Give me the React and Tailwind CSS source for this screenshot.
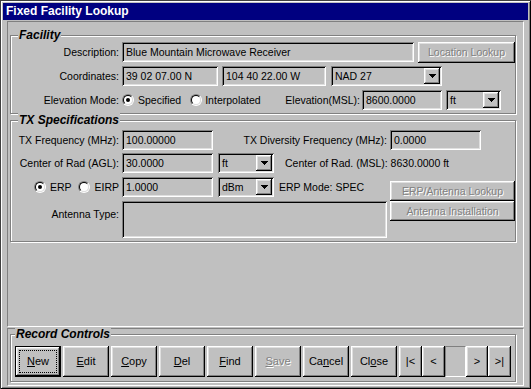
import React from "react"

const raised =
  "shadow-[inset_-1px_-1px_#000,inset_1px_1px_#fff,inset_-2px_-2px_#808080,inset_2px_2px_#dfdfdf]"
const sunken =
  "shadow-[inset_1px_1px_#808080,inset_-1px_-1px_#fff,inset_2px_2px_#000,inset_-2px_-2px_#dfdfdf]"
const etched = "border border-[#808080] shadow-[inset_1px_1px_#fff,1px_1px_#fff]"
const disabledText = "text-[#808080] [text-shadow:1px_1px_0_#fff]"
const thinSunken = "border border-t-[#808080] border-l-[#808080] border-b-white border-r-white"

const Field = ({ className = "", children }) => (
  <div
    className={`${sunken} h-[20px] px-[4px] flex items-center whitespace-nowrap overflow-hidden shrink-0 ${className}`}
  >
    {children}
  </div>
)

const Arrow = () => (
  <svg width="7" height="4" viewBox="0 0 7 4" shapeRendering="crispEdges">
    <path d="M0 0h7v1h-1v1h-1v1h-1v1h-1v-1h-1v-1h-1v-1h-1z" fill="#000" />
  </svg>
)

const Select = ({ className = "", children }) => (
  <div className={`${sunken} h-[20px] p-[2px] flex items-center shrink-0 ${className}`}>
    <span className="flex-1 pl-[2px] whitespace-nowrap">{children}</span>
    <div className={`${raised} w-[16px] h-[16px] flex items-center justify-center`}>
      <Arrow />
    </div>
  </div>
)

const Radio = ({ checked }) => (
  <div className="w-[12px] h-[12px] rounded-full border border-t-[#808080] border-l-[#808080] border-b-white border-r-white shrink-0">
    <div className="w-full h-full rounded-full border border-t-black border-l-black border-b-[#dfdfdf] border-r-[#dfdfdf] bg-white flex items-center justify-center">
      {checked && <div className="w-[4px] h-[4px] rounded-full bg-black" />}
    </div>
  </div>
)

const Btn = ({ className = "", disabled, children }) => (
  <div
    className={`${raised} flex items-center justify-center whitespace-nowrap shrink-0 ${
      disabled ? disabledText : "text-black"
    } ${className}`}
  >
    {children}
  </div>
)

const Group = ({ title, legendLeft = "left-[7px]", className = "", children }) => (
  <div className={`relative ${etched} ${className}`}>
    <span
      className={`absolute ${legendLeft} top-[-8px] px-[1px] bg-[#c0c0c0] font-bold italic text-[12px] leading-[14px]`}
    >
      {title}
    </span>
    {children}
  </div>
)

const Label = ({ children }) => (
  <span className="w-[111px] pr-[3px] text-right whitespace-nowrap shrink-0">{children}</span>
)

const App = () => {
  return (
    <div className="w-[531px] h-[389px] bg-[#c0c0c0] p-[3px] flex flex-col font-['Liberation_Sans',Arial,sans-serif] text-[10.5px] leading-[13px] text-black shadow-[inset_1px_1px_#404040,inset_-1px_-1px_#000,inset_2px_2px_#fff,inset_-2px_-2px_#808080]">
      <div className="h-[17px] bg-[#000080] text-white font-bold text-[12px] px-[3px] flex items-center shrink-0">
        Fixed Facility Lookup
      </div>

      <div className="flex-1 flex flex-col px-[4px] pt-[1px]">
        {/* upper panel */}
        <div className={`h-[306px] ${thinSunken} px-[2px]`}>
          <Group title="Facility" className="mt-[13px] h-[79px] w-[506px] pt-[6px] flex flex-col gap-[4px]">
            <div className="flex items-center h-[20px]">
              <Label>Description:</Label>
              <Field className="w-[292px]">Blue Mountain Microwave Receiver</Field>
              <Btn disabled className="ml-auto w-[97px] h-[21px]">
                Location Lookup
              </Btn>
            </div>
            <div className="flex items-center h-[20px]">
              <Label>Coordinates:</Label>
              <Field className="w-[96px]">39 02 07.00 N</Field>
              <Field className="w-[104px] ml-[4px]">104 40 22.00 W</Field>
              <Select className="w-[111px] ml-[5px]">NAD 27</Select>
            </div>
            <div className="flex items-center h-[20px]">
              <Label>Elevation Mode:</Label>
              <div className="w-[162px] flex items-center shrink-0">
                <Radio checked />
                <span className="ml-[4px]">Specified</span>
                <span className="ml-[9px]">
                  <Radio />
                </span>
                <span className="ml-[3px]">Interpolated</span>
              </div>
              <span className="w-[78px] pr-[2px] text-right whitespace-nowrap shrink-0">Elevation(MSL):</span>
              <Field className="w-[80px]">8600.0000</Field>
              <Select className="w-[55px] ml-[4px]">ft</Select>
            </div>
          </Group>

          <Group title="TX Specifications" className="mt-[6px] h-[122px] w-[506px] pt-[9px] flex flex-col">
            <div className="flex items-center h-[20px]">
              <Label>TX Frequency (MHz):</Label>
              <Field className="w-[91px]">100.00000</Field>
              <span className="w-[177px] pr-[3px] text-right whitespace-nowrap shrink-0">
                TX Diversity Frequency (MHz):
              </span>
              <Field className="w-[91px]">0.0000</Field>
            </div>
            <div className="flex items-center h-[20px] mt-[3px]">
              <Label>Center of Rad (AGL):</Label>
              <Field className="w-[91px]">30.0000</Field>
              <Select className="w-[56px] ml-[5px]">ft</Select>
              <span className="ml-[11px] whitespace-nowrap">Center of Rad. (MSL): 8630.0000 ft</span>
            </div>
            <div className="flex mt-[4px]">
              <div className="w-[379px] flex flex-col shrink-0">
                <div className="flex items-center h-[20px]">
                  <div className="w-[111px] pr-[3px] flex items-center justify-end shrink-0">
                    <Radio checked />
                    <span className="ml-[4px]">ERP</span>
                    <span className="ml-[7px]">
                      <Radio />
                    </span>
                    <span className="ml-[4px]">EIRP</span>
                  </div>
                  <Field className="w-[91px]">1.0000</Field>
                  <Select className="w-[56px] ml-[5px]">dBm</Select>
                  <span className="ml-[5px] whitespace-nowrap">ERP Mode: SPEC</span>
                </div>
                <div className="flex items-start mt-[4px]">
                  <span className="w-[111px] pr-[3px] text-right pt-[7px] shrink-0">Antenna Type:</span>
                  <div className={`${sunken} w-[265px] h-[37px]`} />
                </div>
              </div>
              <div className="flex flex-col pt-[4px]">
                <Btn disabled className="w-[125px] h-[20px]">
                  ERP/Antenna Lookup
                </Btn>
                <Btn disabled className="w-[125px] h-[20px]">
                  Antenna Installation
                </Btn>
              </div>
            </div>
          </Group>
        </div>

        {/* record controls panel */}
        <div className={`flex-1 mt-[1px] ${thinSunken} px-[2px]`}>
          <Group
            title="Record Controls"
            legendLeft="left-[4px]"
            className="mt-[5px] h-[48px] w-[506px] pt-[11px] pl-[4px] flex items-start text-[11px]"
          >
            <div className="relative w-[46px] h-[31px] border border-black shrink-0">
              <Btn className="w-full h-full">
                <u>N</u>ew
              </Btn>
              <div className="absolute inset-[3px] border border-dotted border-black" />
            </div>
            <Btn className="w-[46px] h-[31px] ml-[2px]">
              <u>E</u>dit
            </Btn>
            <Btn className="w-[46px] h-[31px] ml-[2px]">
              <u>C</u>opy
            </Btn>
            <Btn className="w-[46px] h-[31px] ml-[2px]">
              <u>D</u>el
            </Btn>
            <Btn className="w-[46px] h-[31px] ml-[2px]">
              <u>F</u>ind
            </Btn>
            <Btn disabled className="w-[46px] h-[31px] ml-[2px]">
              <u>S</u>ave
            </Btn>
            <Btn className="w-[46px] h-[31px] ml-[2px]">
              Ca<u>n</u>cel
            </Btn>
            <Btn className="w-[46px] h-[31px] ml-[2px]">
              Cl<u>o</u>se
            </Btn>
            <Btn className="w-[23px] h-[31px] ml-[2px]">|&lt;</Btn>
            <Btn className="w-[23px] h-[31px]">&lt;</Btn>
            <div className={`w-[21px] h-[31px] ${thinSunken} shrink-0`} />
            <Btn className="w-[22px] h-[31px]">&gt;</Btn>
            <Btn className="w-[23px] h-[31px]">&gt;|</Btn>
          </Group>
        </div>
      </div>
    </div>
  )
}

export default App
